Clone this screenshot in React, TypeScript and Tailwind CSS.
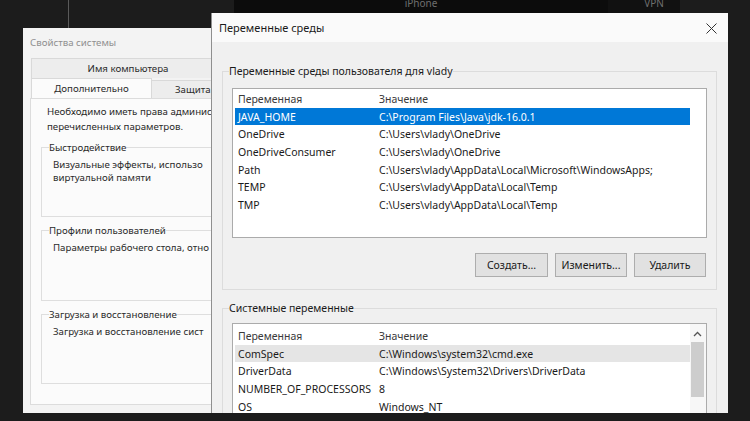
import React from "react";

const userVars: [string, string][] = [
  ["JAVA_HOME", "C:\\Program Files\\Java\\jdk-16.0.1"],
  ["OneDrive", "C:\\Users\\vlady\\OneDrive"],
  ["OneDriveConsumer", "C:\\Users\\vlady\\OneDrive"],
  ["Path", "C:\\Users\\vlady\\AppData\\Local\\Microsoft\\WindowsApps;"],
  ["TEMP", "C:\\Users\\vlady\\AppData\\Local\\Temp"],
  ["TMP", "C:\\Users\\vlady\\AppData\\Local\\Temp"],
];

const sysVars: [string, string][] = [
  ["ComSpec", "C:\\Windows\\system32\\cmd.exe"],
  ["DriverData", "C:\\Windows\\System32\\Drivers\\DriverData"],
  ["NUMBER_OF_PROCESSORS", "8"],
  ["OS", "Windows_NT"],
];

function Row({ name, value, mode }: { name: string; value: string; mode?: "sel" | "soft" | "head" }) {
  const bg =
    mode === "sel" ? "bg-[#0078d7] text-white" : mode === "soft" ? "bg-[#e5e5e5] text-[#1a1a1a]" : mode === "head" ? "text-[#3a3a3a]" : "text-[#1a1a1a]";
  return (
    <div className={`flex h-[17.7px] w-[455px] items-center whitespace-nowrap ${bg}`}>
      <div className="w-[144px] shrink-0 pl-[3px]">{name}</div>
      <div className="flex-1">{value}</div>
    </div>
  );
}

function Btn({ label, w }: { label: string; w: string }) {
  return (
    <div className={`flex h-[24px] ${w} items-center justify-center border border-[#adadad] bg-[#e1e1e1] text-[#1a1a1a]`}>
      {label}
    </div>
  );
}

export default function App() {
  return (
    <div className="relative h-[421px] w-[750px] overflow-hidden bg-[#1c1c1c] font-['Noto_Sans',sans-serif] text-[10.5px] leading-[16px] text-[#1a1a1a]">
      {/* desktop bits */}
      <div className="absolute left-[68px] top-0 h-[28px] w-px bg-[#5a5a5a]" />
      <div className="absolute left-[234px] top-0 flex h-[13px] w-[374px] justify-center overflow-hidden bg-[#0c0c0c]">
        <span className="mt-[-5px] text-[10px] text-[#6f6f6f]">iPhone</span>
      </div>
      <div className="absolute left-[608px] top-0 flex h-[13px] w-[72px] justify-center overflow-hidden bg-[#111111] pl-[20px]">
        <span className="mt-[-5px] text-[10px] text-[#6f6f6f]">VPN</span>
      </div>

      {/* back window: Свойства системы (its right part lies under the front window) */}
      <div className="absolute left-[23px] top-[28px] flex h-[385px] w-[188px] flex-col overflow-hidden bg-[#f3f3f3] text-[9.7px] text-[#2a2a2a]">
        <div className="flex h-[30px] shrink-0 items-center pl-[7px] text-[#8f8f8f]">Свойства системы</div>
        <div className="shrink-0 pl-[8px]">
          <div className="flex h-[20px] w-[194px] items-center justify-center border border-b-0 border-[#d9d9d9] bg-[#ededed]">
            Имя компьютера
          </div>
        </div>
        <div className="flex h-[20px] shrink-0 pl-[8px]">
          <div className="flex w-[121px] shrink-0 items-center justify-center border border-b-0 border-[#d9d9d9] bg-[#fbfbfb]">
            Дополнительно
          </div>
          <div className="mt-[2px] flex w-[100px] shrink-0 items-center border-t border-r border-[#d9d9d9] bg-[#ededed] pl-[23px]">Защита</div>
        </div>
        <div className="mb-[8px] ml-[7px] flex w-[240px] flex-1 flex-col border border-[#dcdcdc] bg-[#fbfbfb] pt-[5px] leading-[15px]">
          <div className="whitespace-nowrap pl-[16px]">
            Необходимо иметь права админис
            <br />
            перечисленных параметров.
          </div>
          <div className="flex flex-col gap-[6px] pl-[10px] pt-[6px]">
            <fieldset className="h-[77px] border border-[#dedede]">
              <legend className="ml-[7px] leading-[15px]">Быстродействие</legend>
              <div className="whitespace-nowrap pl-[11px] pt-[3px] leading-[13px]">
                Визуальные эффекты, использо
                <br />
                виртуальной памяти
              </div>
            </fieldset>
            <fieldset className="h-[78px] border border-[#dedede]">
              <legend className="ml-[7px] leading-[15px]">Профили пользователей</legend>
              <div className="whitespace-nowrap pl-[11px] pt-[3px] leading-[13px]">Параметры рабочего стола, отно</div>
            </fieldset>
            <fieldset className="h-[77px] border border-[#dedede]">
              <legend className="ml-[7px] leading-[15px]">Загрузка и восстановление</legend>
              <div className="whitespace-nowrap pl-[11px] pt-[3px] leading-[13px]">Загрузка и восстановление сист</div>
            </fieldset>
          </div>
        </div>
      </div>

      {/* front window: Переменные среды */}
      <div className="absolute left-[211px] top-[13px] flex h-[400px] w-[517px] flex-col overflow-hidden border-l border-[#8f8f8f] bg-[#f0f0f0]">
        <div className="flex h-[29px] shrink-0 items-center justify-between bg-[#fafafa] pl-[7px] pr-[11px]">
          <span className="text-[11px]">Переменные среды</span>
          <svg width="11" height="11" viewBox="0 0 11 11" className="mt-[1px]">
            <path d="M0.5 0.5 L10.5 10.5 M10.5 0.5 L0.5 10.5" stroke="#333" strokeWidth="1" fill="none" />
          </svg>
        </div>
        <div className="flex flex-1 flex-col pl-[10px] pr-[11px]">
          <fieldset className="mt-[21px] border border-[#dcdcdc]">
            <legend className="ml-[6px]">Переменные среды пользователя для vlady</legend>
            <div className="px-[9px] pb-[12px] pt-[9px]">
              <div className="h-[150px] border border-[#ababab] bg-white pl-[2px] pt-[1px]">
                <Row name="Переменная" value="Значение" mode="head" />
                {userVars.map(([n, v], i) => (
                  <Row key={n} name={n} value={v} mode={i === 0 ? "sel" : undefined} />
                ))}
              </div>
              <div className="mt-[15px] flex justify-end gap-[7px] pr-[1px]">
                <Btn label="Создать..." w="w-[73px]" />
                <Btn label="Изменить..." w="w-[72px]" />
                <Btn label="Удалить" w="w-[72px]" />
              </div>
            </div>
          </fieldset>
          <fieldset className="mt-[10px] border border-[#dcdcdc]">
            <legend className="ml-[6px]">Системные переменные</legend>
            <div className="px-[9px] pt-[7px]">
              <div className="flex h-[130px] border border-[#ababab] bg-white">
                <div className="flex-1 pl-[2px] pt-[3px]">
                  <Row name="Переменная" value="Значение" mode="head" />
                  {sysVars.map(([n, v], i) => (
                    <Row key={n} name={n} value={v} mode={i === 0 ? "soft" : undefined} />
                  ))}
                </div>
                <div className="flex w-[16px] flex-col items-center bg-[#f7f7f7] pr-[1px]">
                  <svg width="9" height="6" viewBox="0 0 9 6" className="mt-[7px]">
                    <path d="M1 5 L4.5 1.5 L8 5" stroke="#555" strokeWidth="1.3" fill="none" />
                  </svg>
                  <div className="mt-[5px] h-[55px] w-[13px] bg-[#cdcdcd]" />
                </div>
              </div>
            </div>
          </fieldset>
        </div>
      </div>
    </div>
  );
}
